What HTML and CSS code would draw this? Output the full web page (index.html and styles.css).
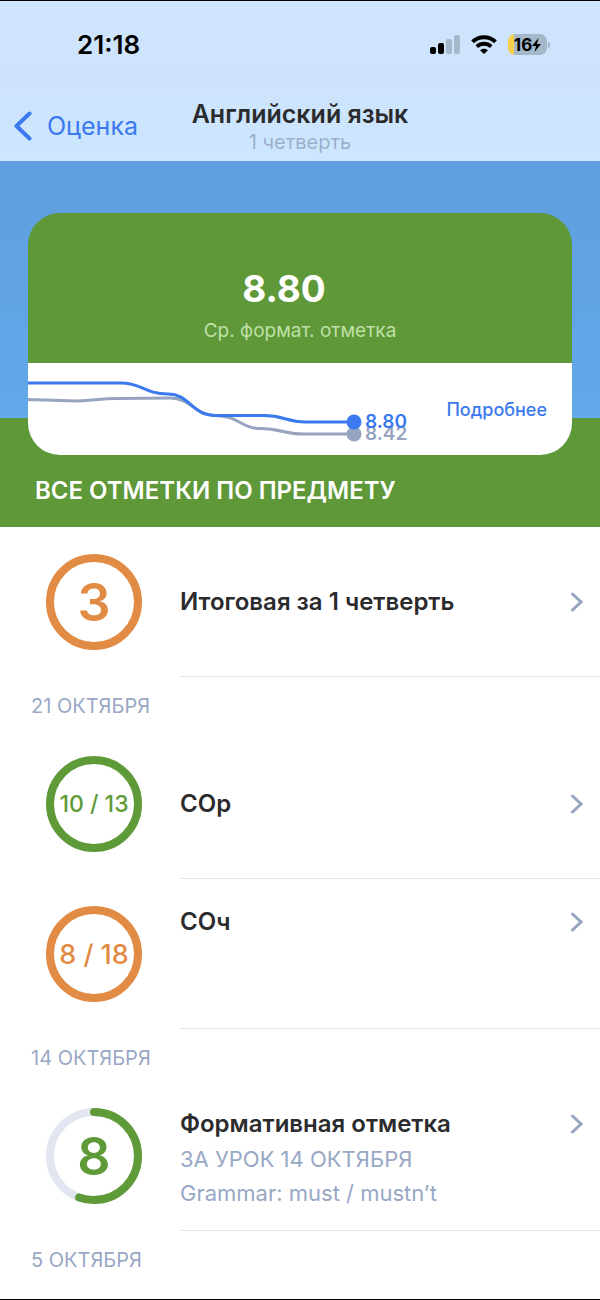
FILE: index.html
```html
<!DOCTYPE html>
<html lang="ru">
<head>
  <meta charset="UTF-8">
  <meta name="viewport" content="width=device-width, initial-scale=1">
  <title>Английский язык</title>
  <link rel="stylesheet" href="styles.css">
</head>
<body>
  <div class="screen">
    <header class="top">
      <div class="status-bar">
        <span class="time">21:18</span>
        <div class="status-icons">
          <svg class="signal" width="30" height="20" viewBox="0 0 30 20">
            <rect x="0" y="12" width="6" height="7" rx="2"/>
            <rect x="8" y="8" width="6" height="11" rx="2"/>
            <rect class="off" x="16" y="4" width="6" height="15" rx="2"/>
            <rect class="off" x="24" y="0" width="6" height="19" rx="2"/>
          </svg>
          <svg class="wifi" width="26" height="20" viewBox="0 0 26 20">
            <path d="M1.5 6.8C8 .7 18 .7 24.500 6.800" fill="none" stroke="#000" stroke-width="4"/>
            <path d="M5.800 11.600c4-3.800 10.400-3.800 14.400 0" fill="none" stroke="#000" stroke-width="3.8"/>
            <path d="M9 15.200c2.300-2.100 5.700-2.100 8 0L13 19z"/>
          </svg>
          <div class="battery">
            <span>16</span>
            <svg width="9" height="14" viewBox="0 0 9 14">
              <path d="M6.5 0L0 8h4L2.500 14L9 6H5z"/>
            </svg>
          </div>
        </div>
      </div>
      <div class="nav">
        <a class="back" href="#">
          <svg width="18" height="30" viewBox="0 0 18 30">
            <path d="M15.500 2.500L2.500 15L15.500 27.500"/>
          </svg>
          Оценка
        </a>
        <div class="nav-title">
          <h1>Английский язык</h1>
          <p>1 четверть</p>
        </div>
      </div>
    </header>

    <section class="hero">
      <div class="card">
        <div class="average">
          <strong>8.80</strong>
          <span>Ср. формат. отметка</span>
        </div>
        <div class="chart-row">
          <svg class="chart" width="390" height="92" viewBox="0 0 390 92">
            <path class="line-class" d="M0 36.500C22 37 36 38 50 38C66 38 70 35.500 90 35.500L142 35C164 35 166 52.500 187 52.500C212 53 212 65.500 233 65.500C252 65.500 256 71 276 71H326"/>
            <path class="line-own" d="M0 20H93C114 20 116 31 140 31C162 31 163 52.500 188 52.500H236C256 52.500 258 59 278 59H326"/>
            <circle class="dot-class" cx="326" cy="71" r="7.500"/>
            <circle class="dot-own" cx="326" cy="59" r="7.500"/>
            <text class="label-class" x="337" y="77">8.42</text>
            <text class="label-own" x="337" y="65">8.80</text>
          </svg>
          <a class="more" href="#">Подробнее</a>
        </div>
      </div>
      <h2>ВСЕ ОТМЕТКИ ПО ПРЕДМЕТУ</h2>
    </section>

    <main class="marks">
      <a class="mark" href="#">
        <div class="ring orange large">3</div>
        <div class="mark-body middle">
          <h3>Итоговая за 1 четверть</h3>
          <svg class="arrow" viewBox="0 0 12 20"><path d="M1.500 2L10 10L1.500 18"/></svg>
        </div>
      </a>

      <p class="date">21 ОКТЯБРЯ</p>
      <a class="mark" href="#">
        <div class="ring green small">10 / 13</div>
        <div class="mark-body middle">
          <h3>СОр</h3>
          <svg class="arrow" viewBox="0 0 12 20"><path d="M1.500 2L10 10L1.500 18"/></svg>
        </div>
      </a>
      <a class="mark" href="#">
        <div class="ring orange medium">8 / 18</div>
        <div class="mark-body">
          <h3>СОч</h3>
          <svg class="arrow" viewBox="0 0 12 20"><path d="M1.500 2L10 10L1.500 18"/></svg>
        </div>
      </a>

      <p class="date">14 ОКТЯБРЯ</p>
      <a class="mark" href="#">
        <div class="ring progress large">
          <svg viewBox="0 0 96 96">
            <circle class="track" cx="48" cy="48" r="44"/>
            <circle class="fill" cx="48" cy="48" r="44" pathLength="100" stroke-dasharray="55.500 100" transform="rotate(-90 48 48)"/>
          </svg>
          <span>8</span>
        </div>
        <div class="mark-body">
          <div>
            <h3>Формативная отметка</h3>
            <p>ЗА УРОК 14 ОКТЯБРЯ</p>
            <p>Grammar: must / mustn’t</p>
          </div>
          <svg class="arrow" viewBox="0 0 12 20"><path d="M1.500 2L10 10L1.500 18"/></svg>
        </div>
      </a>

      <p class="date">5 ОКТЯБРЯ</p>
    </main>
  </div>
</body>
</html>
```
FILE: styles.css
```css
* {
  box-sizing: border-box;
}

body {
  margin: 0;
  background: #fff;
  font-family: Inter, "Liberation Sans", sans-serif;
  color: #2b2b2d;
}

h1, h2, h3, p {
  margin: 0;
}

a {
  color: inherit;
  text-decoration: none;
}

.screen {
  display: flex;
  flex-direction: column;
  min-height: 100vh;
  border-top: 1px solid #000;
  border-bottom: 1px solid #000;
}

/* header */
.top {
  background: linear-gradient(#cfe5fd, #cde3fb 50%, #cce7ff);
}

.status-bar {
  display: flex;
  justify-content: space-between;
  align-items: center;
  height: 87px;
  padding: 0 50px 0 77px;
}

.time {
  font-size: 26px;
  font-weight: 600;
  color: #000;
}

.status-icons {
  display: flex;
  align-items: center;
  gap: 11px;
}

.signal .off {
  fill: #a5b8cc;
}

.battery {
  position: relative;
  display: flex;
  align-items: center;
  justify-content: center;
  width: 39px;
  height: 21px;
  margin-right: 3px;
  border-radius: 7px;
  background: linear-gradient(90deg, #f6cf4c 6px, #a5b8c9 6px);
  color: #000;
  font-size: 17px;
  font-weight: 700;
}

.battery::after {
  content: "";
  position: absolute;
  right: -3px;
  width: 2px;
  height: 6px;
  border-radius: 0 2px 2px 0;
  background: #a5b8c9;
}

.nav {
  display: grid;
  grid-template-columns: 1fr auto 1fr;
  height: 73px;
  padding: 0 14px;
}

.back {
  display: flex;
  align-items: center;
  gap: 15px;
  height: 73px;
  padding-top: 2px;
  color: #3b79ee;
  font-size: 25px;
}

.back svg path {
  fill: none;
  stroke: #3b79ee;
  stroke-width: 4;
  stroke-linecap: round;
  stroke-linejoin: round;
}

.nav-title {
  padding-top: 10px;
  text-align: center;
}

.nav-title h1 {
  font-size: 25px;
  font-weight: 600;
  line-height: 32px;
}

.nav-title p {
  font-size: 20px;
  line-height: 24px;
  color: #9db0cb;
}

/* average card */
.hero {
  padding: 52px 28px 0;
  background: linear-gradient(#5f9edf, #61a9e9 257px, #5e9838 257px);
}

.card {
  overflow: hidden;
  border-radius: 32px;
}

.average {
  display: flex;
  flex-direction: column;
  align-items: center;
  height: 150px;
  padding: 52px 32px 0 0;
  background: #5e9838;
  color: #fff;
}

.average strong {
  font-size: 37px;
  line-height: 48px;
}

.average span {
  margin: 6px 0 0 32px;
  font-size: 19px;
  line-height: 24px;
  color: #bfe0a6;
}

.chart-row {
  display: flex;
  align-items: center;
  justify-content: space-between;
  padding-right: 25px;
  background: #fff;
}

.chart path {
  fill: none;
  stroke-width: 3;
}

.chart text {
  font-size: 19px;
  font-weight: 600;
}

.line-class { stroke: #97a4bf; }
.line-own { stroke: #3b79ee; }
.dot-class, .label-class { fill: #97a4bf; }
.dot-own, .label-own { fill: #3b79ee; }

.more {
  color: #3b79ee;
  font-size: 18px;
  font-weight: 500;
}

.hero h2 {
  padding-left: 7px;
  color: #fff;
  font-size: 24px;
  font-weight: 600;
  line-height: 72px;
}

/* list of marks */
.mark {
  display: flex;
  height: 150px;
}

.ring {
  display: flex;
  align-items: center;
  justify-content: center;
  flex: none;
  width: 96px;
  height: 96px;
  margin: 27px 38px 0 46px;
  border: 8px solid;
  border-radius: 50%;
  font-weight: 600;
  white-space: nowrap;
}

.orange { color: #e18b45; }
.green { color: #5e9b38; }
.large { font-size: 52px; }
.medium { font-size: 27px; }
.small { font-size: 23px; }

.medium,
.small {
  font-weight: 500;
}

.progress {
  display: grid;
  place-items: center;
  border: 0;
  color: #5e9b38;
}

.progress svg,
.progress span {
  grid-area: 1 / 1;
}

.progress svg {
  width: 96px;
  height: 96px;
}

.progress circle {
  fill: none;
  stroke-width: 8;
}

.progress .track {
  stroke: #e1e6f1;
}

.progress .fill {
  stroke: #5e9b38;
  stroke-linecap: round;
}

.mark-body {
  display: flex;
  flex: 1;
  align-items: flex-start;
  justify-content: space-between;
  padding: 25px 17px 0 0;
  border-bottom: 1px solid #dfe3ea;
}

.mark-body.middle {
  align-items: center;
  padding-top: 0;
}

.mark-body h3 {
  font-size: 24px;
  font-weight: 600;
  line-height: 36px;
}

.mark-body p {
  font-size: 22px;
  line-height: 34px;
  color: #98a8c5;
}

.arrow {
  flex: none;
  width: 12px;
  height: 36px;
}

.arrow path {
  fill: none;
  stroke: #97a4bf;
  stroke-width: 3;
  stroke-linecap: round;
}

.date {
  height: 52px;
  padding: 17px 31px 0;
  font-size: 20px;
  line-height: 24px;
  color: #98a8c5;
}
```
